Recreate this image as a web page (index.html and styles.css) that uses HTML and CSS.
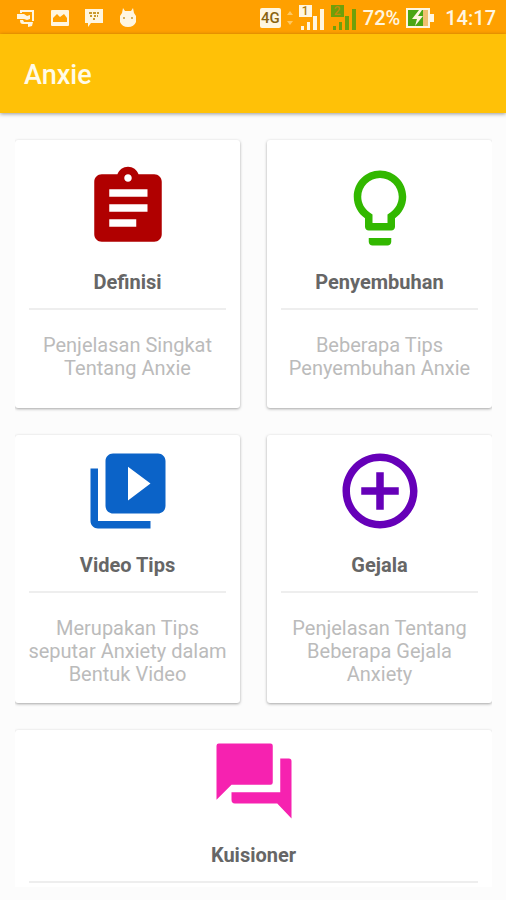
FILE: index.html
```html
<!DOCTYPE html>
<html lang="id">
<head>
<meta charset="utf-8">
<meta name="viewport" content="width=device-width, initial-scale=1">
<title>Anxie</title>
<link rel="stylesheet" href="styles.css">
</head>
<body>
<div class="status">
  <div class="status-left">
    <svg width="20" height="20" viewBox="0 0 20 20"><path d="M4 2h14v11h-2V4H6v1H4zM1 6h7l3 2 3-1v4l-3 1-3-1H1zM4 12h3l1 2h9l-1 4-4 1v-3H7c-2 0-3-1-3-4z"/></svg>
    <svg width="20" height="20" viewBox="0 0 20 20"><path fill-rule="evenodd" d="M2 2h16q1 0 1 1v14q0 1-1 1H2q-1 0-1-1V3q0-1 1-1zm1 12h14v-4l-3-4-4 3-3-3-4 4z"/></svg>
    <svg width="20" height="20" viewBox="0 0 20 20"><path d="M1 1h18v14H7l-3 4v-4H1z"/><path class="ink" d="M5 4h3v2H5zM9 4h3v2H9zM13 4h2v2h-2zM6 7h2v2H6zM10 7h2v2h-2zM13 7h1v2h-1zM9 10h2v2H9z"/></svg>
    <svg width="20" height="20" viewBox="0 0 20 20"><path d="M5 0l2 3h6l2-3 1 5 2 3v6q-2 5-8 5t-8-5V8l2-3z"/><circle class="ink" cx="6" cy="10" r="1"/><circle class="ink" cx="14" cy="10" r="1"/></svg>
  </div>
  <div class="status-right">
    <span class="net">4G</span>
    <svg class="updown" width="6" height="18" viewBox="0 0 6 18"><path d="M0 6l3-4 3 4zM0 12h6l-3 4z"/></svg>
    <span class="sim"><svg width="26" height="26" viewBox="0 0 26 26"><path d="M0 0h13v12H0zM2 21h3v4H2zM8 17h3v8H8zM14 11h4v14h-4zM21 4h4v21h-4z"/></svg><span class="sim-no">1</span></span>
    <span class="sim sim-green"><svg width="26" height="26" viewBox="0 0 26 26"><path d="M0 0h13v12H0zM2 21h3v4H2zM8 17h3v8H8zM14 11h4v14h-4zM21 4h4v21h-4z"/></svg><span class="sim-no">2</span></span>
    <span class="pct">72%</span>
    <svg width="28" height="20" viewBox="0 0 28 20"><path d="M0 0h24v6h4v8h-4v6H0z"/><path class="charge" d="M2 2h15v16H2z"/><path class="rest" d="M17 2h5v16h-5z"/><path d="M13 2L6 11h5l-2 7 8-10h-5l4-6z"/></svg>
    <span class="time">14:17</span>
  </div>
</div>
<header class="appbar"><h1>Anxie</h1></header>
<main class="grid">
  <a class="card" href="#definisi">
    <svg class="icon red" viewBox="0 0 24 24"><path d="M19 3h-4.180C14.400 1.840 13.300 1 12 1c-1.300 0-2.400.840-2.820 2H5c-1.100 0-2 .900-2 2v14c0 1.100.900 2 2 2h14c1.100 0 2-.900 2-2V5c0-1.100-.900-2-2-2zm-7 0c.550 0 1 .450 1 1s-.450 1-1 1-1-.450-1-1 .450-1 1-1zm2.200 14H7v-2h7.200v2zm3-4H7v-2h10.200v2zm0-4H7V7h10.200v2z"/></svg>
    <h2>Definisi</h2>
    <p>Penjelasan Singkat Tentang Anxie</p>
  </a>
  <a class="card" href="#penyembuhan">
    <svg class="icon green" viewBox="0 0 24 24"><path d="M9 21c0 .550.450 1 1 1h4c.550 0 1-.450 1-1v-1H9v1zm3-19C8.140 2 5 5.140 5 9c0 2.380 1.190 4.470 3 5.740V17c0 .550.450 1 1 1h6c.550 0 1-.450 1-1v-2.260c1.810-1.270 3-3.360 3-5.740 0-3.860-3.140-7-7-7zm2.850 11.100l-.850.600V16h-4v-2.300l-.850-.600C7.800 12.160 7 10.630 7 9c0-2.760 2.240-5 5-5s5 2.240 5 5c0 1.630-.800 3.160-2.150 4.100z"/></svg>
    <h2>Penyembuhan</h2>
    <p>Beberapa Tips Penyembuhan Anxie</p>
  </a>
  <a class="card" href="#video">
    <svg class="icon blue" viewBox="0 0 24 24"><path d="M4 6H2v14c0 1.100.900 2 2 2h14v-2H4V6zm16-4H8c-1.100 0-2 .900-2 2v12c0 1.100.900 2 2 2h12c1.100 0 2-.900 2-2V4c0-1.100-.900-2-2-2zm-8 12.500v-9l6 4.500-6 4.500z"/></svg>
    <h2>Video Tips</h2>
    <p>Merupakan Tips seputar Anxiety dalam Bentuk Video</p>
  </a>
  <a class="card" href="#gejala">
    <svg class="icon purple" viewBox="0 0 24 24"><path d="M13 7h-2v4H7v2h4v4h2v-4h4v-2h-4V7zm-1-5C6.480 2 2 6.480 2 12s4.480 10 10 10 10-4.480 10-10S17.520 2 12 2zm0 18c-4.410 0-8-3.590-8-8s3.590-8 8-8 8 3.590 8 8-3.590 8-8 8z"/></svg>
    <h2>Gejala</h2>
    <p>Penjelasan Tentang Beberapa Gejala Anxiety</p>
  </a>
  <a class="card wide" href="#kuisioner">
    <svg class="icon pink" viewBox="0 0 24 24"><path d="M2.600 2h13.800q.6 0 .6.600v9.800q0 .6-.6.600H6l-4 4V2.600Q2 2 2.600 2zM19 6h2.300q.7 0 .7.700V22l-3.800-4H6.900Q6 18 6 17v-2h13z"/></svg>
    <h2>Kuisioner</h2>
  </a>
</main>
</body>
</html>
```
FILE: styles.css
```css
* { box-sizing: border-box; margin: 0; padding: 0; }
body {
  height: 100vh;
  display: flex;
  flex-direction: column;
  overflow: hidden;
  background: #fcfcfc;
  font-family: Roboto, "Liberation Sans", sans-serif;
}
svg { display: block; fill: currentColor; flex: none; }

.status {
  flex: none;
  height: 34px;
  padding: 2px 10px 0 16px;
  display: flex;
  align-items: center;
  justify-content: space-between;
  background: #ffa000;
  color: #fff6e0;
  font-size: 20px;
  font-weight: 500;
}
.status-left { display: flex; gap: 14px; }
.status-right { display: flex; align-items: center; gap: 6px; }
.ink { fill: #c99a30; }
.charge { fill: #4ba614; }
.rest { fill: #f0c070; }
.net {
  padding: 0 1px;
  background: #fff6e0;
  color: #8a6410;
  border-radius: 2px;
  font-size: 15px;
  line-height: 20px;
}
.updown { color: #ffc860; }
.sim { position: relative; }
.sim-green { color: #6fa00a; }
.sim-no {
  position: absolute;
  top: 0;
  left: 3px;
  color: #b07c10;
  font-size: 12px;
  line-height: 12px;
}
.sim-green .sim-no { color: #c98a08; }
.time { margin-left: 5px; }

.appbar {
  flex: none;
  z-index: 1;
  height: 79px;
  padding: 2px 24px 0;
  display: flex;
  align-items: center;
  background: #ffc107;
  box-shadow: 0 1px 4px rgba(0, 0, 0, 0.4);
}
.appbar h1 {
  color: #fffbe8;
  font-size: 27px;
  font-weight: 500;
  line-height: 32px;
}

.grid {
  flex: 1;
  min-height: 0;
  margin: 0 14px 13px 15px;
  padding-top: 27px;
  display: grid;
  grid-template-columns: 1fr 1fr;
  grid-auto-rows: min-content;
  gap: 27px;
  overflow: hidden;
}
.card {
  min-height: 268px;
  padding: 0 12px 6px;
  display: flex;
  flex-direction: column;
  justify-content: center;
  align-items: center;
  background: #fff;
  border-radius: 3px;
  box-shadow: 0 1px 3px rgba(0, 0, 0, 0.35);
  text-align: center;
  text-decoration: none;
}
.wide {
  grid-column: 1 / -1;
  justify-content: flex-start;
  padding-top: 6px;
}
.icon { width: 90px; height: 90px; }
.red { color: #b00000; }
.green { color: #32b800; }
.blue { color: #0b63c8; }
.purple { color: #6600b8; }
.pink { color: #f622b0; }
.card h2 {
  align-self: stretch;
  margin: 17px 2px 0;
  padding-bottom: 14px;
  border-bottom: 2px solid #eee;
  color: #666;
  font-size: 20px;
  font-weight: 700;
  line-height: 24px;
}
.card p {
  margin-top: 24px;
  color: #bbb;
  font-size: 20px;
  line-height: 23px;
}
```
